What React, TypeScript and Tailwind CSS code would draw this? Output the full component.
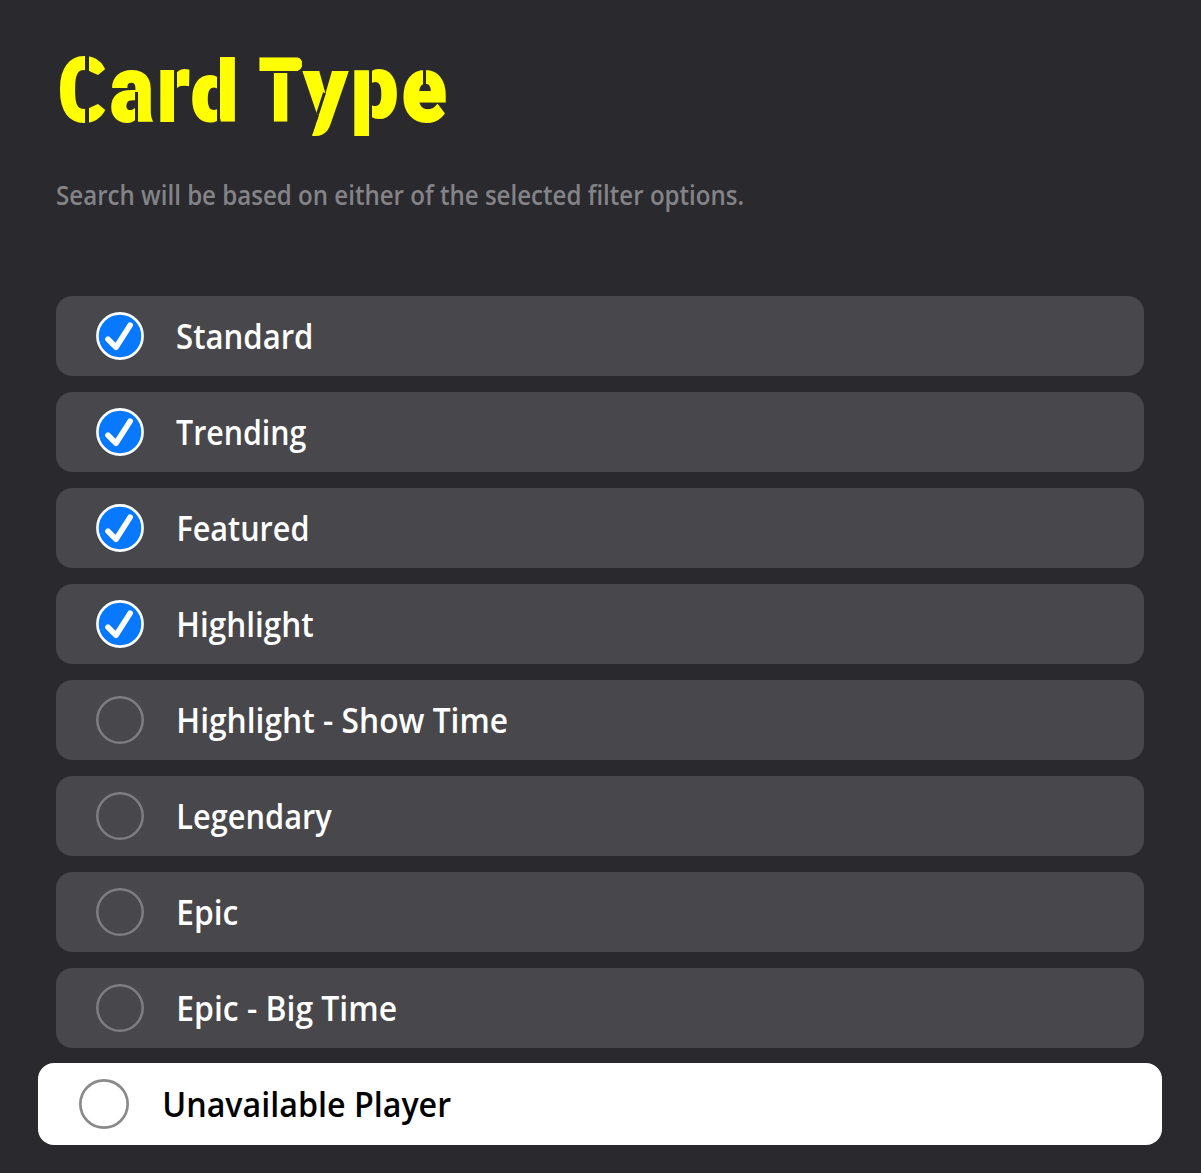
import { useLayoutEffect, useRef, type ReactNode } from "react";

/* Text condensed so that its visible ink spans the whole width of its box. */
function InkText({ text, className, baseline, fitHeight = false, stroke = 0 }: { text: string; className: string; baseline?: number; fitHeight?: boolean; stroke?: number }) {
  const ref = useRef<HTMLSpanElement>(null);
  useLayoutEffect(() => {
    const fit = () => {
      const el = ref.current;
      const box = el?.parentElement;
      const ctx = document.createElement("canvas").getContext("2d");
      if (!el || !box || !ctx) return;
      const cs = getComputedStyle(el);
      const size = parseFloat(cs.fontSize);
      ctx.font = `${cs.fontWeight} ${cs.fontSize} ${cs.fontFamily}`;
      const m = ctx.measureText(text);
      const edge = stroke / 2;
      const left = -m.actualBoundingBoxLeft - edge;
      const inkWidth = m.actualBoundingBoxRight + edge - left;
      const ascent = m.actualBoundingBoxAscent + edge;
      const base = (size - m.fontBoundingBoxAscent - m.fontBoundingBoxDescent) / 2 + m.fontBoundingBoxAscent;
      const sx = box.clientWidth / inkWidth;
      const sy = fitHeight ? box.clientHeight / (ascent + m.actualBoundingBoxDescent + edge) : 1;
      const ty = fitHeight ? -(base - ascent) * sy : (baseline ?? base) - base;
      el.style.transform = `translate(${-left * sx}px, ${ty}px) scale(${sx}, ${sy})`;
    };
    fit();
    document.fonts.ready.then(fit);
  }, [text, baseline, fitHeight, stroke]);
  return (
    <span ref={ref} className={`block w-max origin-top-left leading-none whitespace-pre ${className}`}>
      {text}
    </span>
  );
}

function Letter({ char, box, children }: { char: string; box: string; children?: ReactNode }) {
  return (
    <span className={`relative block shrink-0 ${box}`}>
      <InkText text={char} fitHeight stroke={2} className="font-['Roboto'] text-[93px] font-black [-webkit-text-stroke:2px_#ffff00]" />
      {children}
    </span>
  );
}

const cut = "absolute bg-[#2a292e]";

function Title() {
  return (
    <h1 aria-label="Card Type" className="flex h-[81px] items-start pl-[60px] text-[#ffff00]">
      <Letter char="C" box="h-[67px] w-[48px]">
        <span className={`${cut} -top-px left-[25px] h-[69px] w-[4px]`} />
        <span className={`${cut} top-0 left-[27px] h-[67px] w-[22px] [clip-path:polygon(100%_10px,11px_19px,2px_15px,2px_52px,11px_48px,100%_57px)]`} />
      </Letter>
      <Letter char="a" box="mt-[14px] ml-[3px] h-[53px] w-[42px]">
        <span className={`${cut} top-[22px] left-[24px] h-[32px] w-[3px]`} />
      </Letter>
      <Letter char="r" box="mt-[13px] ml-[7px] h-[53px] w-[30px]">
        <span className={`${cut} top-0 left-[14px] h-[54px] w-[3px]`} />
        <span className={`${cut} top-[22px] left-[14px] h-[32px] w-[17px]`} />
      </Letter>
      <Letter char="d" box="mt-px ml-[2px] h-[66px] w-[43px]">
        <span className={`${cut} -top-px left-[25px] h-[68px] w-[3px]`} />
      </Letter>
      <Letter char="T" box="mt-px ml-[24px] h-[65px] w-[43px]">
        <span className={`${cut} top-[14px] left-0 h-[2px] w-[43px]`} />
        <span className="absolute -top-px -right-px h-[16px] w-[8px] bg-[radial-gradient(circle_at_0_50%,transparent_7px,#2a292e_7.6px)]" />
      </Letter>
      <Letter char="y" box="mt-[15px] h-[65px] w-[47px] [clip-path:polygon(0_0,47px_0,26px_65px,10px_65px,17px_44px,12px_42px)]">
        <span className={`${cut} top-[21px] left-[16.5px] h-[26px] w-[2.5px] rotate-[18deg]`} />
      </Letter>
      <Letter char="p" box="mt-[14px] ml-[5px] h-[66px] w-[43px]">
        <span className={`${cut} -top-px left-[15px] h-[68px] w-[3px]`} />
      </Letter>
      <Letter char="e" box="mt-[14px] ml-[6px] h-[53px] w-[43px]">
        <span className={`${cut} -top-px left-[20px] h-[20px] w-[3px]`} />
      </Letter>
    </h1>
  );
}

function Check() {
  return (
    <svg viewBox="0 0 48 48" className="size-12 shrink-0" fill="none">
      <circle cx="24" cy="24" r="22.6" fill="#0879ff" stroke="#fff" strokeWidth="2.6" />
      <path d="M12 27.2 20 35.2 34.1 13.2" stroke="#fff" strokeWidth="5.6" strokeLinecap="round" strokeLinejoin="round" />
    </svg>
  );
}

function Ring({ className }: { className: string }) {
  return (
    <svg viewBox="0 0 48 48" className={`shrink-0 ${className}`} fill="none" stroke="currentColor">
      <circle cx="24" cy="24" r="22.7" strokeWidth="2.6" />
    </svg>
  );
}

const options = [
  { label: "Standard", checked: true, width: "w-[134px]", gap: "ml-[33px]" },
  { label: "Trending", checked: true, width: "w-[130px]", gap: "ml-[32px]" },
  { label: "Featured", checked: true, width: "w-[128px]", gap: "ml-[34.5px]" },
  { label: "Highlight", checked: true, width: "w-[134px]", gap: "ml-[34.5px]" },
  { label: "Highlight - Show Time", checked: false, width: "w-[328px]", gap: "ml-[34.5px]" },
  { label: "Legendary", checked: false, width: "w-[153px]", gap: "ml-[34.5px]" },
  { label: "Epic", checked: false, width: "w-[59px]", gap: "ml-[34.5px]" },
  { label: "Epic - Big Time", checked: false, width: "w-[217px]", gap: "ml-[34.5px]" },
];

export default function App() {
  return (
    <main className="h-[1173px] w-[1201px] overflow-hidden bg-[#2a292e] pt-14 font-['Open_Sans',sans-serif]">
      <Title />
      <p className="mt-[43px] ml-[57px] h-[40px] w-[686px] text-[#848388]">
        <InkText text="Search will be based on either of the selected filter options." baseline={25.5} className="text-[26.5px] font-semibold" />
      </p>
      <ul className="mt-[76px] ml-14 flex w-[1088px] flex-col gap-4">
        {options.map((o) => (
          <li key={o.label} className="flex h-20 items-center rounded-2xl bg-[#48474c] pl-10">
            {o.checked ? <Check /> : <Ring className="size-12 text-[#7d7c81]" />}
            <span className={`block h-20 text-white ${o.width} ${o.gap}`}>
              <InkText text={o.label} baseline={53} className="text-[35px] font-semibold" />
            </span>
          </li>
        ))}
      </ul>
      <div className="mt-[15px] ml-[38px] flex h-[82px] w-[1124px] items-center rounded-2xl bg-white pl-[41px]">
        <Ring className="size-[50px] text-[#8a8a8a]" />
        <span className="ml-[35.5px] block h-[82px] w-[286px] text-black">
          <InkText text="Unavailable Player" baseline={54} className="text-[35px] font-semibold" />
        </span>
      </div>
    </main>
  );
}
